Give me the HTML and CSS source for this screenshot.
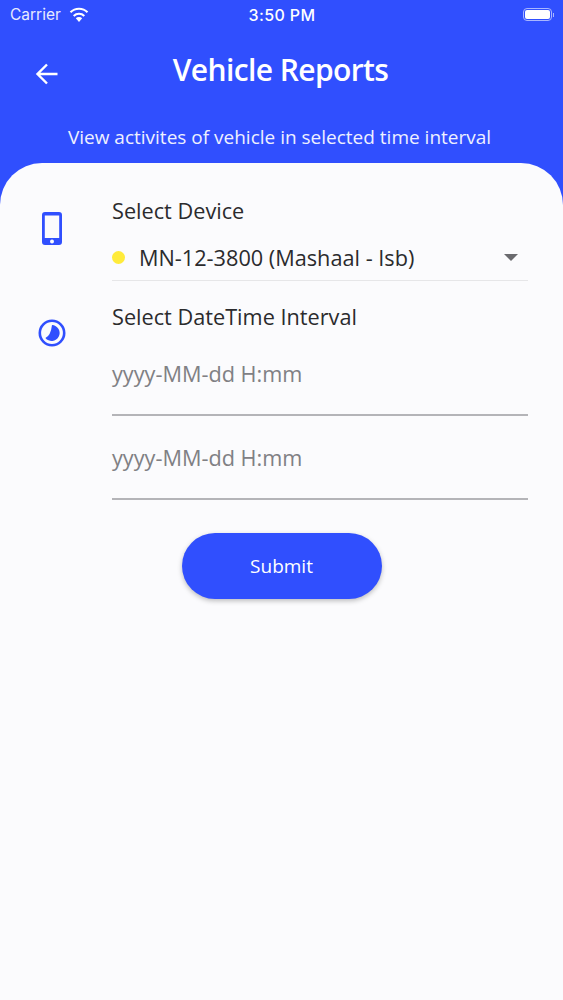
FILE: index.html
```html
<!DOCTYPE html>
<html>
<head>
  <title>Vehicle Reports</title>
  <link rel="stylesheet" href="styles.css">
</head>
<body>
  <div class="screen">
    <div class="status-bar">
      <div class="status-left">
        <span>Carrier</span>
        <svg class="wifi" width="20" height="15" viewBox="0 0 20 15">
          <path d="M10 15 L6.8 11.3 A4.6 4.6 0 0 1 13.2 11.3 Z" fill="#fff"/>
          <path d="M4.7 8.9 A7.6 7.6 0 0 1 15.3 8.9" fill="none" stroke="#fff" stroke-width="2.1"/>
          <path d="M1.5 5.3 A12 12 0 0 1 18.5 5.3" fill="none" stroke="#fff" stroke-width="2.1"/>
        </svg>
      </div>
      <div class="status-time">3:50 PM</div>
      <div class="status-right">
        <div class="battery"><div class="battery-fill"></div></div>
        <div class="battery-tip"></div>
      </div>
    </div>

    <div class="header">
      <svg class="back" width="24" height="24" viewBox="0 0 24 24">
        <path d="M22.5 12 H2.5 M12 2.5 L2.5 12 L12 21.5" fill="none" stroke="#fff" stroke-width="2.4"/>
      </svg>
      <h1>Vehicle Reports</h1>
    </div>
    <p class="subtitle">View activites of vehicle in selected time interval</p>

    <div class="sheet">
      <div class="row row-device">
        <div class="icon-col">
          <svg width="20" height="33" viewBox="0 0 20 33">
            <path fill-rule="evenodd" d="M3 0 H17 A3 3 0 0 1 20 3 V30 A3 3 0 0 1 17 33 H3 A3 3 0 0 1 0 30 V3 A3 3 0 0 1 3 0 Z M2.8 3.6 V26 H17.2 V3.6 Z" fill="#304ffe"/>
            <circle cx="10" cy="29.5" r="2" fill="#fbfbfd"/>
          </svg>
        </div>
        <div class="field-col">
          <div class="label">Select Device</div>
          <div class="select">
            <span class="dot"></span>
            <span class="select-text">MN-12-3800 (Mashaal - Isb)</span>
            <span class="caret"></span>
          </div>
        </div>
      </div>

      <div class="row row-interval">
        <div class="icon-col icon-clock">
          <svg width="28" height="28" viewBox="0 0 28 28">
            <circle cx="14" cy="14" r="12.2" fill="none" stroke="#304ffe" stroke-width="2.6"/>
            <path d="M14 6 A8 8 0 1 1 7.4 19 Q12.8 16.5 14 6 Z" fill="#304ffe"/>
          </svg>
        </div>
        <div class="field-col">
          <div class="label">Select DateTime Interval</div>
          <div class="date-field">yyyy-MM-dd H:mm</div>
          <div class="date-field">yyyy-MM-dd H:mm</div>
        </div>
      </div>

      <div class="actions">
        <button class="submit">Submit</button>
      </div>
    </div>
  </div>
</body>
</html>
```

FILE: styles.css
```css
html, body {
  margin: 0;
  padding: 0;
}

body {
  font-family: "Open Sans", sans-serif;
  background-color: #304ffe;
}

.screen {
  width: 563px;
  height: 1000px;
  display: flex;
  flex-direction: column;
  overflow: hidden;
}

.status-bar {
  height: 29px;
  display: flex;
  align-items: center;
  justify-content: space-between;
  padding: 0 9px 0 10px;
  color: #fff;
  font-family: Inter, sans-serif;
  font-size: 15.5px;
}

.status-left {
  width: 120px;
  display: flex;
  align-items: center;
  gap: 8px;
  color: #e6eaff;
}

.status-time {
  font-size: 16px;
  font-weight: 500;
  letter-spacing: 0.4px;
}

.status-right {
  width: 120px;
  display: flex;
  align-items: center;
  justify-content: flex-end;
  gap: 1px;
}

.battery {
  width: 25px;
  height: 9px;
  padding: 1px;
  border: 1px solid #a9b6ff;
  border-radius: 4px;
}

.battery-fill {
  height: 100%;
  background-color: #fff;
  border-radius: 2px;
}

.battery-tip {
  width: 1px;
  height: 4px;
  background-color: #a9b6ff;
}

.header {
  height: 56px;
  margin-top: 12px;
  padding-right: 2px;
  display: flex;
  align-items: center;
  justify-content: center;
  position: relative;
}

.back {
  position: absolute;
  left: 35px;
  top: 21px;
}

h1 {
  margin: 0;
  color: #fff;
  font-size: 30px;
  font-weight: 600;
  letter-spacing: -0.6px;
}

.subtitle {
  margin: 28px 0 0;
  padding-right: 4px;
  height: 38px;
  color: #eef0ff;
  font-size: 19px;
  line-height: 25px;
  text-align: center;
}

.sheet {
  flex: 1;
  background-color: #fbfbfd;
  border-radius: 42px 42px 0 0;
  padding: 0 35px 0 0;
}

.row {
  display: flex;
}

.row-device {
  padding-top: 33px;
}

.row-interval {
  padding-top: 21px;
}

.icon-col {
  width: 112px;
  display: flex;
  justify-content: center;
  align-items: flex-start;
  padding: 16px 8px 0 0;
  box-sizing: border-box;
  flex-shrink: 0;
}

.icon-clock {
  padding-top: 17px;
}

.field-col {
  flex: 1;
}

.label {
  color: #2b2b2d;
  font-size: 21.7px;
  line-height: 30px;
}

.select {
  height: 46px;
  margin-top: 8px;
  display: flex;
  align-items: center;
  border-bottom: 1px solid #e6e6e8;
}

.dot {
  width: 13px;
  height: 13px;
  border-radius: 50%;
  background-color: #ffeb3b;
  margin-right: 14px;
}

.select-text {
  flex: 1;
  color: #2b2b2d;
  font-size: 21.7px;
}

.caret {
  width: 0;
  height: 0;
  margin-right: 10px;
  border-left: 7px solid transparent;
  border-right: 7px solid transparent;
  border-top: 7px solid #6a6a6e;
}

.date-field {
  height: 84px;
  box-sizing: border-box;
  padding-top: 27px;
  color: #808084;
  font-size: 21.7px;
  line-height: 30px;
  border-bottom: 2px solid #b4b4b8;
}

.actions {
  display: flex;
  justify-content: center;
  padding: 33px 0 0 35px;
}

.submit {
  width: 200px;
  height: 66px;
  border: none;
  border-radius: 33px;
  background-color: #304ffe;
  color: #fff;
  font-family: "Open Sans", sans-serif;
  font-size: 19px;
  box-shadow: 0 2px 5px rgba(0, 0, 0, 0.25);
}
```
